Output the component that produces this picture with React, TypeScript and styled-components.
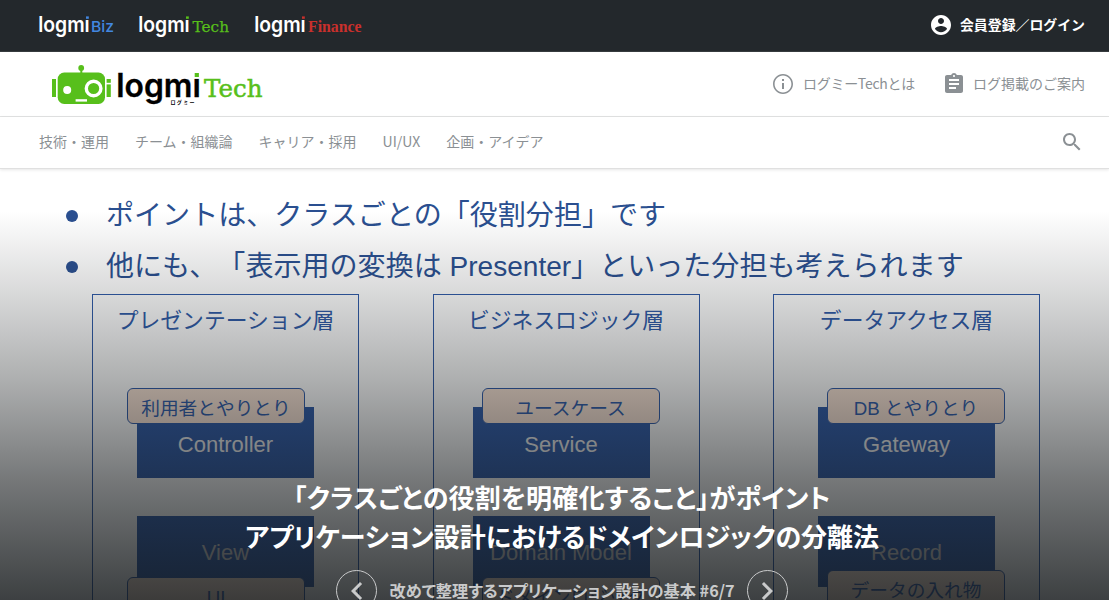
import React from "react";
import styled, { createGlobalStyle } from "styled-components";

const JP = `"Noto Sans CJK JP", sans-serif`;
const SLIDE_FONT = `"Liberation Sans", "Noto Sans CJK JP", sans-serif`;
const NAVY = "#2a4f90";
const LAYER_BLUE = "#2f5ba9";

const GlobalStyle = createGlobalStyle`
  * { box-sizing: border-box; }
  body { margin: 0; background: #fff; font-family: ${JP}; overflow: hidden; }
  h1, h2, p, ul { margin: 0; padding: 0; font-weight: inherit; }
`;

const Page = styled.div`
  display: flex;
  flex-direction: column;
  height: 600px;
  overflow: hidden;
`;

const TopBar = styled.div`
  flex: none;
  height: 52px;
  display: flex;
  align-items: center;
  justify-content: space-between;
  padding: 0 24px 0 38px;
  background: #23282c;
  border-bottom: 1px solid #363b3e;
`;

const SiteList = styled.div`
  display: flex;
  gap: 22px;
`;

const Login = styled.a`
  display: flex;
  align-items: center;
  gap: 7px;
  color: #fff;
  font-weight: 700;
  font-size: 13.9px;
  line-height: 22px;
  padding-bottom: 2px;
`;

const Header = styled.header`
  flex: none;
  height: 65px;
  display: flex;
  align-items: center;
  justify-content: space-between;
  padding: 0 24px 0 50px;
  border-bottom: 1px solid #e2e3e3;
`;

const HeaderLinks = styled.div`
  display: flex;
  gap: 27px;
`;

const HeaderLink = styled.a<{ $gap?: number; $tracking?: number }>`
  display: flex;
  align-items: center;
  gap: ${(p) => p.$gap ?? 8}px;
  color: #8b9094;
  font-size: 14px;
  line-height: 22px;
  letter-spacing: ${(p) => p.$tracking ?? 0}px;
`;

const LinkText = styled.span`
  padding-bottom: 2px;
`;

const NavBar = styled.nav`
  position: relative;
  z-index: 2;
  flex: none;
  height: 52px;
  display: flex;
  align-items: center;
  justify-content: space-between;
  padding: 0 25px 2px 39px;
  background: #fff;
  border-bottom: 1px solid #e0e0e0;
  box-shadow: 0 1px 3px rgba(0, 0, 0, 0.1);
`;

const NavList = styled.div`
  display: flex;
  gap: 26px;
  padding-bottom: 2px;
`;

const NavItem = styled.a`
  color: #8b9094;
  font-size: 14px;
  line-height: 24px;
`;

const Hero = styled.main`
  position: relative;
  flex: 1;
  overflow: hidden;
`;

const Slide = styled.section`
  font-family: ${SLIDE_FONT};
  color: ${NAVY};
  padding-top: 21px;
  text-spacing-trim: space-all;
`;

const Bullets = styled.ul`
  display: flex;
  flex-direction: column;
  list-style: none;
  padding-left: 66px;
`;

const Bullet = styled.li`
  display: flex;
  align-items: center;
  height: 51px;
  font-size: 28.05px;
  line-height: 51px;
  white-space: pre;

  &::before {
    content: "";
    width: 12px;
    height: 12px;
    margin-right: 28px;
    border-radius: 50%;
    background: ${NAVY};
  }
`;

const Layers = styled.div`
  display: grid;
  grid-template-columns: repeat(3, 267px);
  column-gap: 73.5px;
  padding: 2px 0 0 92px;
  color: ${LAYER_BLUE};
`;

const Layer = styled.div`
  height: 400px;
  border: 1.4px solid ${LAYER_BLUE};
`;

const LayerTitle = styled.h2`
  height: 93px;
  padding-top: 9px;
  font-size: 21.8px;
  line-height: 34px;
  text-align: center;
`;

const Node = styled.div<{ $left: number; $late?: boolean }>`
  position: relative;
  width: 177px;
  height: 71px;
  margin: ${(p) => (p.$late ? "38px" : "19px")} 0 0 ${(p) => p.$left}px;
  background: ${LAYER_BLUE};
  color: ${(p) => (p.$late ? "#cfcfcf" : "#f4f4f4")};
  font-size: 22px;
  line-height: ${(p) => (p.$late ? 74 : 75)}px;
  text-align: center;
`;

const Tag = styled.div<{ $left: number; $top: number }>`
  position: absolute;
  left: ${(p) => p.$left}px;
  top: ${(p) => p.$top}px;
  width: 178px;
  height: 36px;
  border: 1.5px solid ${LAYER_BLUE};
  border-radius: 6px;
  background: #fbe5d6;
  color: ${LAYER_BLUE};
  font-size: 18.7px;
  line-height: 39px;
  white-space: pre;
`;

const Shade = styled.div`
  position: absolute;
  inset: 0;
  background: linear-gradient(
    rgba(18, 22, 24, 0) 42px,
    rgba(18, 22, 24, 0.165) 125px,
    rgba(18, 22, 24, 0.345) 211px,
    rgba(18, 22, 24, 0.58) 311px,
    rgba(18, 22, 24, 0.7) 371px,
    rgba(18, 22, 24, 0.82) 431px
  );
`;

const Caption = styled.div`
  position: absolute;
  left: 0;
  right: 0;
  top: 308px;
  display: flex;
  flex-direction: column;
  align-items: center;
  padding-left: 15px;
  color: #fff;
  font-feature-settings: "palt";
`;

const Title = styled.h1`
  font-size: 26px;
  font-weight: 700;
  line-height: 39px;
  text-align: center;
  white-space: nowrap;
`;

const TitleLead = styled.span`
  letter-spacing: 0.2px;
`;

const Series = styled.div`
  display: flex;
  align-items: center;
  gap: 12px;
  margin-top: 15px;
  color: #c9cacb;
`;

const SeriesName = styled.p`
  font-size: 16.2px;
  font-weight: 700;
  line-height: 22px;
  padding-bottom: 2px;
  white-space: nowrap;
`;

const RoundButton = styled.button`
  display: grid;
  place-items: center;
  width: 41px;
  height: 41px;
  padding: 0;
  border: 1px solid #c9cacb;
  border-radius: 50%;
  background: none;
  color: inherit;
`;

type SiteProps = { name: string; color: string; font: string; weight: number; size: number; bold: number; x: number; nameWidth: number; width: number };

const SiteLogo = ({ name, color, font, weight, size, bold, x, nameWidth, width }: SiteProps) => (
  <svg width={width} height="28" viewBox={`0 0 ${width} 28`}>
    <text x="0.2" y="20.4" fontFamily="Inter" fontWeight="600" fontSize="21.5" fill="#fff" textLength="51.5" lengthAdjust="spacingAndGlyphs">logmi</text>
    <rect x="47" y="2.5" width="4.8" height="5" fill="#23282c" />
    <rect x="48" y="4.4" width="2.8" height="2.4" fill={color} />
    <text x={x} y="20.4" fontFamily={font} fontWeight={weight} fontSize={size} fill={color} stroke={color} strokeWidth={bold} textLength={nameWidth} lengthAdjust="spacingAndGlyphs">{name}</text>
  </svg>
);

const MainLogo = () => (
  <svg width="216" height="48" viewBox="50 60 216 48">
    <g fill="#57bf1b">
      <rect x="52" y="79" width="4" height="18" />
      <rect x="57.7" y="72.5" width="47.3" height="31.5" rx="6.5" />
      <rect x="80.3" y="67" width="2" height="7" />
      <circle cx="81.2" cy="68" r="2.9" />
      <rect x="106.6" y="79" width="4.2" height="3.8" />
      <rect x="106.6" y="84.4" width="4.2" height="12.6" />
    </g>
    <circle cx="67.2" cy="90" r="4" fill="#fff" />
    <circle cx="93.6" cy="88.5" r="7.3" fill="none" stroke="#fff" strokeWidth="3.4" />
    <rect x="75.6" y="99.2" width="11.4" height="2.4" fill="#fff" />
    <text x="116.2" y="97.3" fontFamily="Inter" fontWeight="600" fontSize="32" fill="#000" stroke="#000" strokeWidth="0.3" textLength="84.6" lengthAdjust="spacingAndGlyphs">logmi</text>
    <rect x="193" y="70" width="8" height="8.6" fill="#fff" />
    <rect x="194.7" y="73" width="4.2" height="4" fill="#57bf1b" />
    <text x="170.5" y="104.2" fontFamily="Noto Sans CJK JP" fontWeight="700" fontSize="5" fill="#000" textLength="24">ログミー</text>
    <text x="204" y="97.3" fontFamily="DejaVu Serif" fontSize="24" fill="#57bf1b" stroke="#57bf1b" strokeWidth="0.5" textLength="58.5" lengthAdjust="spacingAndGlyphs">Tech</text>
  </svg>
);

const Icon = ({ d, size = 24 }: { d: string; size?: number }) => (
  <svg width={size} height={size} viewBox="0 0 24 24" fill="currentColor">
    <path d={d} />
  </svg>
);

const ICONS = {
  account: "M12 2C6.48 2 2 6.48 2 12s4.48 10 10 10 10-4.48 10-10S17.52 2 12 2zm0 3c1.66 0 3 1.34 3 3s-1.34 3-3 3-3-1.34-3-3 1.34-3 3-3zm0 14.2c-2.5 0-4.71-1.28-6-3.22.03-1.99 4-3.08 6-3.08 1.99 0 5.97 1.09 6 3.08-1.29 1.94-3.5 3.22-6 3.22z",
  info: "M11 17h2v-6h-2v6zm1-15C6.48 2 2 6.48 2 12s4.48 10 10 10 10-4.48 10-10S17.52 2 12 2zm0 18.4c-4.63 0-8.4-3.77-8.4-8.4s3.77-8.4 8.4-8.4 8.4 3.77 8.4 8.4-3.77 8.4-8.4 8.4zM11 9h2V7h-2v2z",
  clipboard: "M19 3h-4.18C14.4 1.84 13.3 1 12 1c-1.3 0-2.4.84-2.82 2H5c-1.1 0-2 .9-2 2v14c0 1.1.9 2 2 2h14c1.1 0 2-.9 2-2V5c0-1.1-.9-2-2-2zm-7 0c.55 0 1 .45 1 1s-.45 1-1 1-1-.45-1-1 .45-1 1-1zm2 14H7v-2h7v2zm3-4H7v-2h10v2zm0-4H7V7h10v2z",
  search: "M15.5 14h-.79l-.28-.27C15.41 12.59 16 11.11 16 9.5 16 5.91 13.09 3 9.5 3S3 5.91 3 9.5 5.91 16 9.5 16c1.61 0 3.09-.59 4.23-1.57l.27.28v.79l5 4.99L20.49 19l-4.99-5zm-6 0C7.01 14 5 11.99 5 9.5S7.01 5 9.5 5 14 7.01 14 9.5 11.99 14 9.5 14z",
  left: "M15.41 7.41L14 6l-6 6 6 6 1.41-1.41L10.83 12z",
  right: "M10 6L8.59 7.41 13.17 12l-4.58 4.59L10 18l6-6z",
};

const SITES: SiteProps[] = [
  { name: "Biz", color: "#4287e0", font: "Inter", weight: 500, size: 15.2, bold: 0, x: 53, nameWidth: 23, width: 78 },
  { name: "Tech", color: "#57bf1b", font: "DejaVu Serif", weight: 400, size: 15.5, bold: 0.25, x: 54.5, nameWidth: 36.5, width: 94 },
  { name: "Finance", color: "#c9302c", font: "Liberation Serif", weight: 700, size: 16, bold: 0, x: 54, nameWidth: 53.5, width: 110 },
];

const CATEGORIES = ["技術・運用", "チーム・組織論", "キャリア・採用", "UI/UX", "企画・アイデア"];

const LAYERS = [
  { title: "プレゼンテーション層", left: 44, tag: "利用者とやりとり", tagLeft: -10, node: "Controller", second: "View", secondTag: "UI", secondTagTop: 61 },
  { title: "ビジネスロジック層", left: 39, tag: "ユースケース", tagLeft: 9, node: "Service", second: "Domain Model", secondTag: "ドメインロジック", secondTagTop: 61 },
  { title: "データアクセス層", left: 44, tag: "DB とやりとり", tagLeft: 9, node: "Gateway", second: "Record", secondTag: "データの入れ物", secondTagTop: 54 },
];

export default function App() {
  return (
    <Page>
      <GlobalStyle />
      <TopBar>
        <SiteList>
          {SITES.map((s) => <SiteLogo key={s.name} {...s} />)}
        </SiteList>
        <Login><Icon d={ICONS.account} /><LinkText>会員登録／ログイン</LinkText></Login>
      </TopBar>
      <Header>
        <MainLogo />
        <HeaderLinks>
          <HeaderLink $tracking={-0.27}><Icon d={ICONS.info} /><LinkText>ログミーTechとは</LinkText></HeaderLink>
          <HeaderLink $gap={7}><Icon d={ICONS.clipboard} /><LinkText>ログ掲載のご案内</LinkText></HeaderLink>
        </HeaderLinks>
      </Header>
      <NavBar>
        <NavList>
          {CATEGORIES.map((c) => <NavItem key={c}>{c}</NavItem>)}
        </NavList>
        <HeaderLink><Icon d={ICONS.search} /></HeaderLink>
      </NavBar>
      <Hero>
        <Slide>
          <Bullets>
            <Bullet>ポイントは、クラスごとの「役割分担」です</Bullet>
            <Bullet>他にも、「表示用の変換は Presenter」といった分担も考えられます</Bullet>
          </Bullets>
          <Layers>
            {LAYERS.map((l) => (
              <Layer key={l.title}>
                <LayerTitle>{l.title}</LayerTitle>
                <Node $left={l.left}>
                  {l.node}
                  <Tag $left={l.tagLeft} $top={-19}>{l.tag}</Tag>
                </Node>
                <Node $left={l.left} $late>
                  {l.second}
                  <Tag $left={l.tagLeft} $top={l.secondTagTop}>{l.secondTag}</Tag>
                </Node>
              </Layer>
            ))}
          </Layers>
        </Slide>
        <Shade />
        <Caption>
          <Title>
            <TitleLead>「クラスごとの役割を明確化すること」がポイント</TitleLead><br />
            アプリケーション設計におけるドメインロジックの分離法
          </Title>
          <Series>
            <RoundButton aria-label="前へ"><Icon d={ICONS.left} size={36} /></RoundButton>
            <SeriesName>改めて整理するアプリケーション設計の基本 #6/7</SeriesName>
            <RoundButton aria-label="次へ"><Icon d={ICONS.right} size={36} /></RoundButton>
          </Series>
        </Caption>
      </Hero>
    </Page>
  );
}
